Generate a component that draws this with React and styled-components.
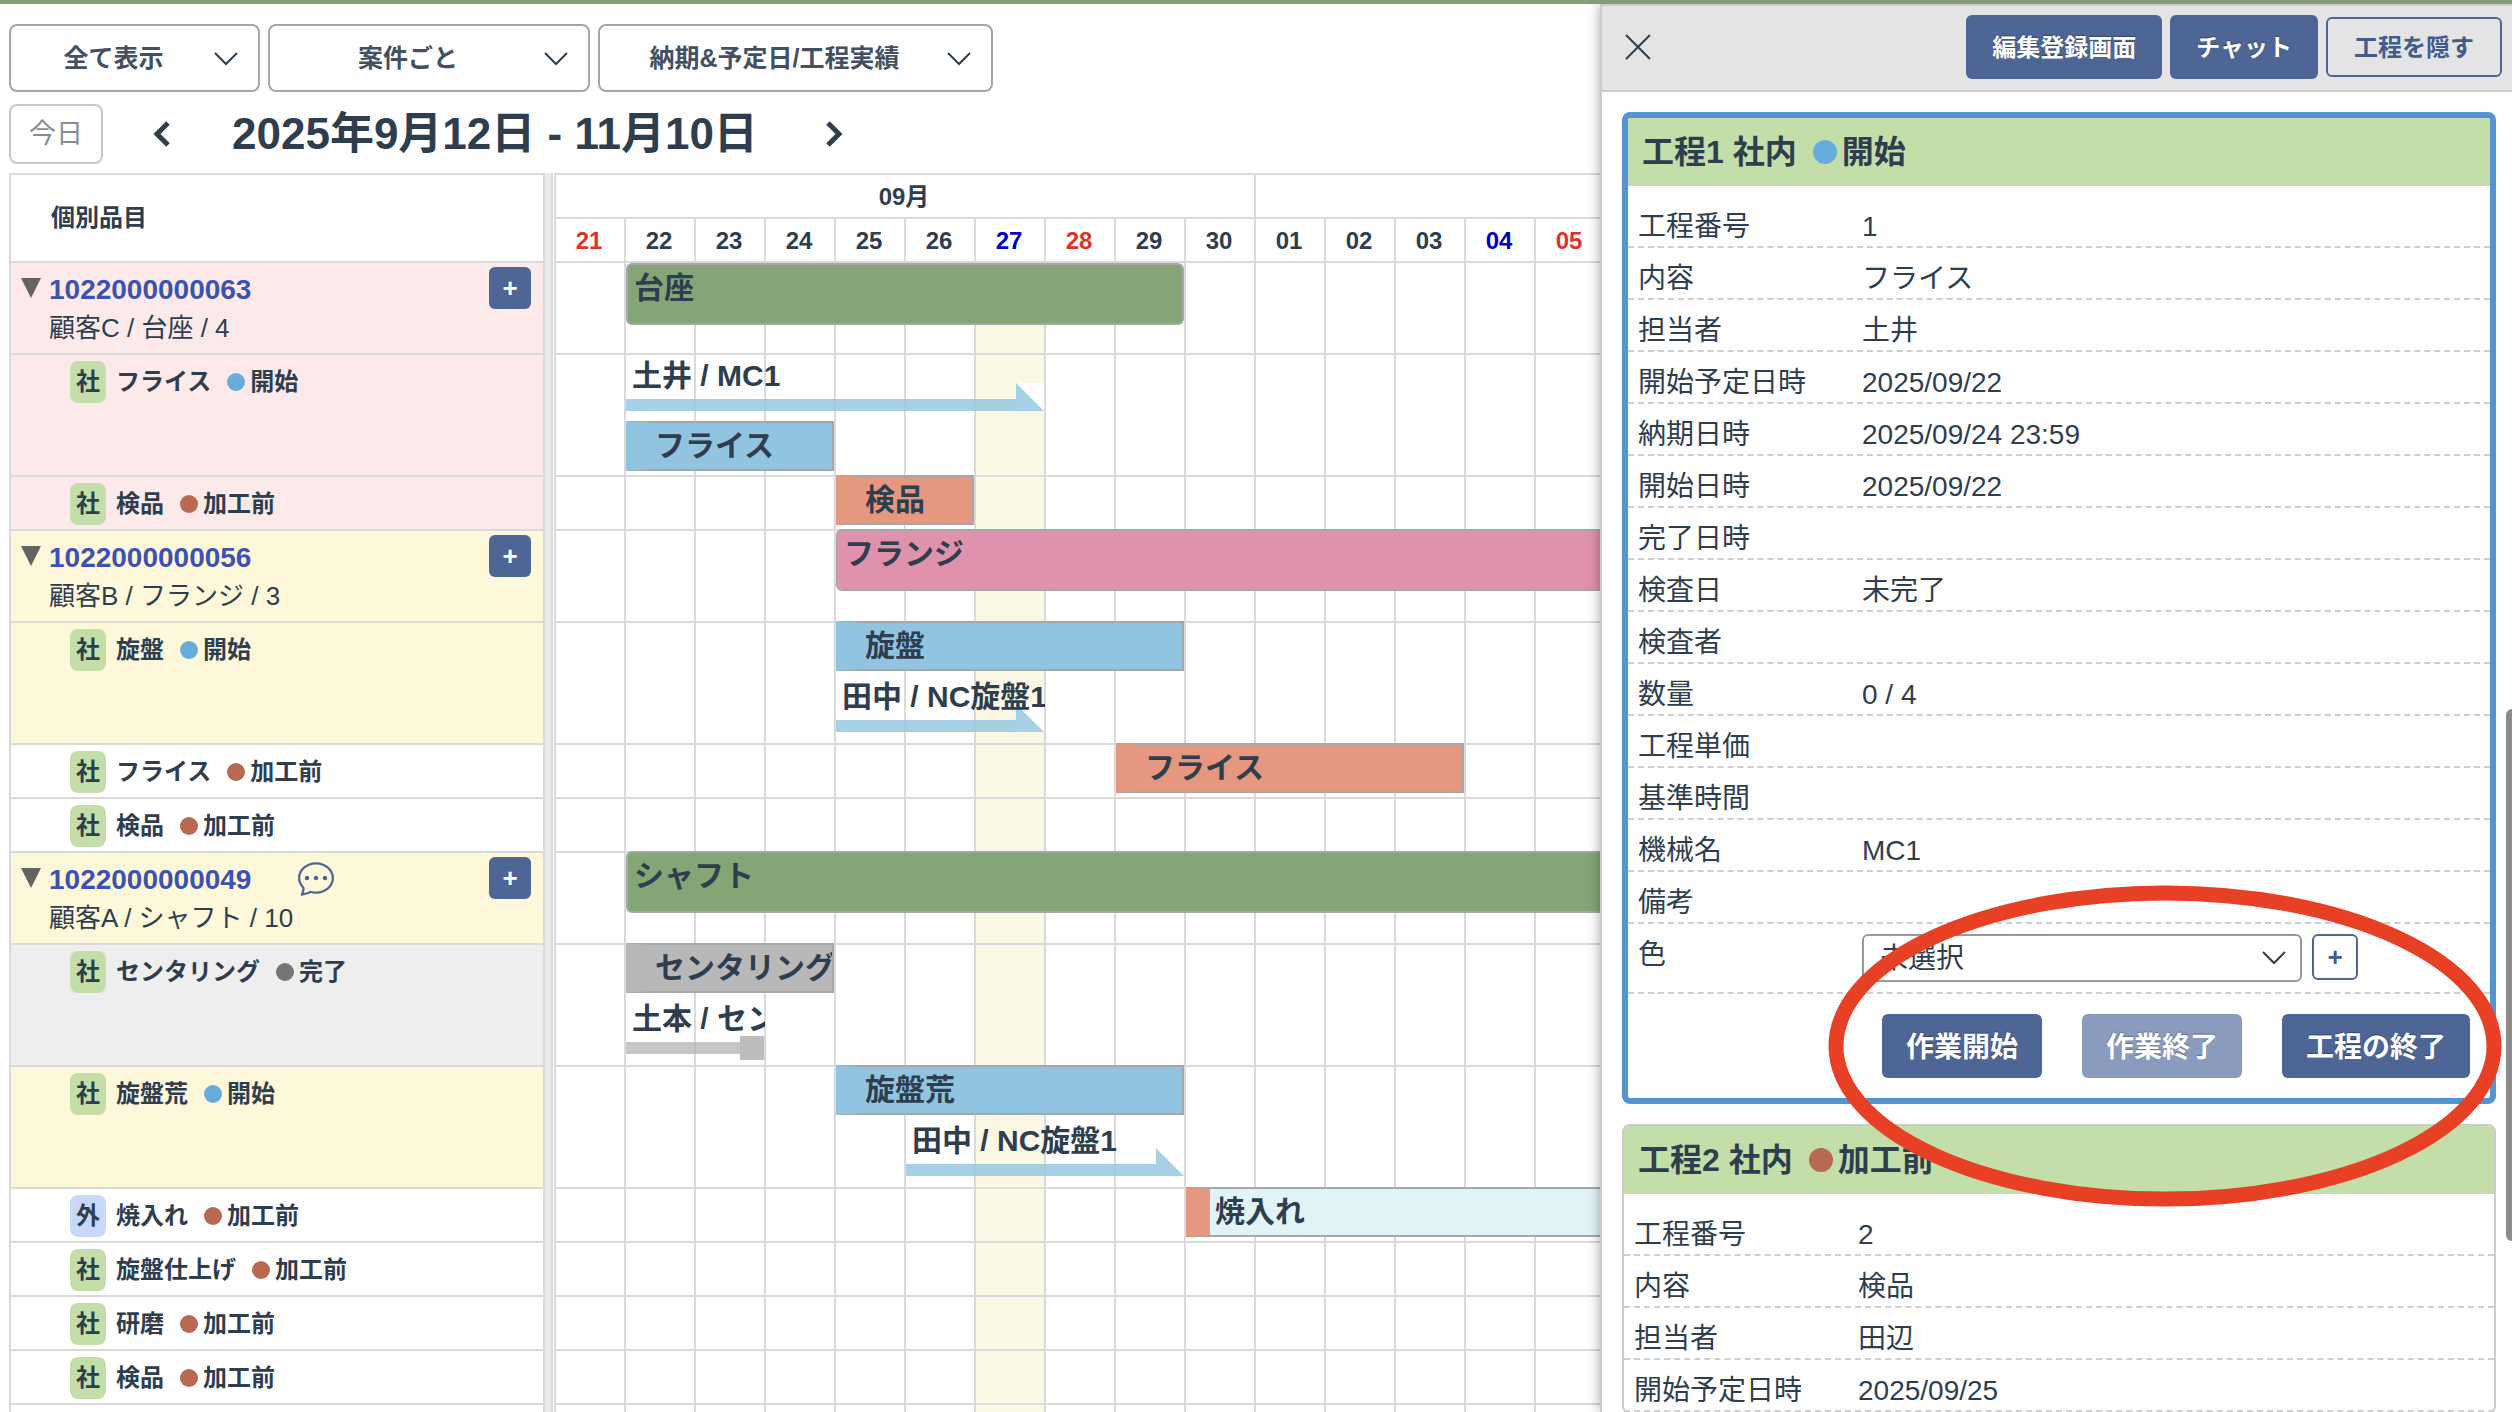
import styled, { createGlobalStyle } from 'styled-components';
import { BsChatDots } from 'react-icons/bs';

const GlobalStyle = createGlobalStyle`
  * {
    box-sizing: border-box;
  }
  body {
    margin: 0;
    background: #fff;
    color: #2f3e4e;
    font-family: "Liberation Sans", "Noto Sans CJK JP", sans-serif;
    font-size: 24px;
  }
  button, select {
    font-family: inherit;
    color: inherit;
  }
`;

const line = '#dadada';

const statusColors = {
  start: '#66addb',
  before: '#b86a50',
  done: '#757575',
};

const barColors = {
  green: '#84a676',
  pink: '#e091ab',
  blue: '#90c4e0',
  salmon: '#e59780',
  gray: '#b8b8b8',
  pale: '#e2f3f8',
};

const rowColors = {
  pink: '#fceaea',
  yellow: '#fdf8da',
  gray: '#eeeeee',
};

const Page = styled.div`
  display: flex;
  height: 100vh;
  overflow: hidden;
  border-top: 4px solid #849c78;
`;

const Main = styled.main`
  flex: 1;
  min-width: 0;
  padding: 20px 0 0 9px;
  overflow: hidden;
`;

const Filters = styled.div`
  display: flex;
  gap: 8px;
`;

const FilterBox = styled.label`
  position: relative;
  width: ${(props) => props.$width}px;

  svg {
    position: absolute;
    right: 22px;
    top: 28px;
    pointer-events: none;
  }
`;

const FilterSelect = styled.select`
  appearance: none;
  width: 100%;
  height: 68px;
  padding: 0 42px 0 0;
  border: 2px solid #a6a6a6;
  border-radius: 8px;
  background: #fff;
  color: #435063;
  font-size: 25px;
  font-weight: bold;
  text-align: center;
  text-align-last: center;
`;

const DateNav = styled.div`
  display: flex;
  align-items: center;
  height: 60px;
  margin: 12px 0 9px;
`;

const TodayButton = styled.button`
  width: 94px;
  height: 60px;
  margin-right: 39px;
  padding: 0;
  border: 2px solid #c8c8c8;
  border-radius: 8px;
  background: #fff;
  color: #858e98;
  font-size: 27px;
  line-height: 54px;
`;

const ArrowButton = styled.button`
  display: flex;
  align-items: center;
  justify-content: center;
  width: 40px;
  height: 44px;
  padding: 0;
  border: 0;
  background: none;
`;

const Period = styled.h1`
  margin: 0 56px 0 50px;
  font-size: 44px;
  line-height: 60px;
  white-space: nowrap;
`;

const Gantt = styled.div`
  display: flex;
`;

const Splitter = styled.div`
  flex: none;
  width: 8px;
  margin-right: 1px;
  border-right: 2px solid ${line};
  background: #ebebeb;
`;

const ItemTable = styled.table`
  flex: none;
  width: 536px;
  border-collapse: separate;
  border-spacing: 0;
  border: solid ${line};
  border-width: 2px 2px 0 2px;
`;

const ItemHead = styled.th`
  height: 88px;
  padding: 0 40px;
  border-bottom: 2px solid ${line};
  text-align: left;
  font-size: 24px;
  line-height: 28px;
`;

const ItemCell = styled.td`
  height: ${(props) => props.$height}px;
  padding: 0;
  border-bottom: 2px solid ${line};
  background: ${(props) => rowColors[props.$bg] || '#fff'};
  vertical-align: top;
`;

const OrderLine = styled.div`
  display: flex;
  align-items: center;
  height: 42px;
  margin: 4px 12px 0 10px;
`;

const Toggle = styled.button`
  display: flex;
  width: 28px;
  padding: 0;
  border: 0;
  background: none;
`;

const OrderLink = styled.a`
  padding-top: 3px;
  color: #3d52b0;
  font-size: 28px;
  font-weight: bold;
  text-decoration: none;
`;

const ChatLink = styled.a`
  display: flex;
  margin-left: 47px;
  color: #4d6695;
`;

const AddButton = styled.button`
  width: 42px;
  height: 42px;
  margin-left: auto;
  padding: 0;
  border: 0;
  border-radius: 6px;
  background: #4d6695;
  color: #fff;
  font-size: 26px;
  font-weight: bold;
`;

const Customer = styled.div`
  margin-left: 38px;
  font-size: 26px;
  line-height: 38px;
`;

const TaskLine = styled.div`
  display: flex;
  align-items: center;
  height: 42px;
  margin: 6px 0 0 59px;
  font-weight: bold;
  line-height: 42px;
`;

const Badge = styled.span`
  width: 36px;
  height: 42px;
  margin-right: 10px;
  border-radius: 8px;
  background: ${(props) => (props.$outside ? '#c9d8f8' : '#c3dea9')};
  text-align: center;
`;

const Dot = styled.span`
  width: ${(props) => props.$size}px;
  height: ${(props) => props.$size}px;
  margin: 0 5px 0 16px;
  border-radius: 50%;
  background: ${(props) => statusColors[props.$status]};
`;

const ChartPane = styled.div`
  flex: 1;
  min-width: 0;
  overflow: hidden;
`;

const ChartTable = styled.table`
  table-layout: fixed;
  width: 1122px;
  border-collapse: separate;
  border-spacing: 0;
  border: solid ${line};
  border-width: 2px 0 0 2px;
`;

const HeadCell = styled.th`
  height: 44px;
  padding: 2px 2px 0 0;
  border: solid ${line};
  border-width: 0 2px 2px 0;
  color: ${(props) => props.$color || 'inherit'};
  font-size: 24px;
  line-height: 36px;
`;

/* day lines every 70px, and the strip that marks today */
const ChartCell = styled.td`
  height: ${(props) => props.$height}px;
  padding: 0;
  border-bottom: 2px solid ${line};
  background:
    linear-gradient(#faf7e4, #faf7e4) 420px 0 / 68px 100% no-repeat,
    linear-gradient(to right, transparent 68px, ${line} 68px) 0 0 / 70px 100%;
  vertical-align: top;
`;

const Lanes = styled.div`
  display: grid;
  grid-template-columns: repeat(16, 70px);
  row-gap: 3px;
  margin-top: -2px;

  tr:first-child & {
    margin-top: 0;
  }
`;

const Bar = styled.div`
  grid-column: ${(props) => props.$from} / span ${(props) => props.$days};
  margin-right: 2px;
  border: 2px solid #a5a8aa;
  font-size: 30px;
  font-weight: bold;
  line-height: 46px;
  white-space: nowrap;
  overflow: hidden;
`;

const SummaryBar = styled(Bar)`
  height: 62px;
  padding-left: 6px;
  border-radius: 6px;
  background: ${(props) => barColors[props.$color]};
`;

const PlanBar = styled(Bar)`
  height: 50px;
  padding-left: 5px;
  border-left: 24px solid ${(props) => barColors[props.$color]};
  background: ${(props) => barColors[props.$fill || props.$color]};
`;

const Actual = styled.div`
  grid-column: ${(props) => props.$from} / span ${(props) => props.$days};
  position: relative;
  height: 65px;
  margin-right: 1px;
  overflow: hidden;
  font-size: 30px;
  font-weight: bold;
  line-height: 46px;
  white-space: nowrap;
`;

const ActualLabel = styled.div`
  position: relative;
  z-index: 1;
  height: 46px;
  padding-left: 6px;
`;

const Strip = styled.div`
  height: 12px;
  margin-right: ${(props) => (props.$done ? 25 : 28)}px;
  background: ${(props) => (props.$done ? 'rgba(184, 184, 184, 0.8)' : 'rgba(144, 196, 224, 0.8)')};
`;

const Tip = styled.svg`
  position: absolute;
  right: 1px;
  top: 30px;
`;

const EndBlock = styled.span`
  position: absolute;
  right: 1px;
  top: 40px;
  width: 24px;
  height: 24px;
  background: #bcbcbc;
`;

const Panel = styled.aside`
  position: relative;
  flex: none;
  width: 912px;
  border: solid #c9cccc;
  border-width: 2px 0 0 2px;
  background: #fff;
  box-shadow: 0 0 12px rgba(0, 0, 0, 0.35);
`;

const PanelHead = styled.header`
  display: flex;
  align-items: center;
  gap: 8px;
  height: 86px;
  padding: 0 10px 2px 23px;
  border-bottom: 2px solid #c9cccc;
  background: #e4e4e4;
`;

const CloseButton = styled.button`
  display: flex;
  margin-right: auto;
  padding: 0;
  border: 0;
  background: none;
`;

const Button = styled.button`
  height: 64px;
  padding: 0 26px 3px;
  border: 0;
  border-radius: 6px;
  background: #4d6695;
  color: #fff;
  font-size: 24px;
  font-weight: bold;
  text-shadow: 0 -1px 1px rgba(0, 0, 0, 0.3);
  white-space: nowrap;
`;

const OutlineButton = styled(Button)`
  height: 60px;
  border: 2px solid #4d6695;
  background: none;
  color: #435a8c;
  text-shadow: none;
`;

const ActionButton = styled(Button)`
  padding: 0 24px 3px;
  font-size: 28px;

  &:disabled {
    background: #8a9bbd;
  }
`;

const Cards = styled.div`
  display: flex;
  flex-direction: column;
  gap: 20px;
  padding: 20px 16px 0 20px;
`;

const Card = styled.section`
  border: ${(props) => (props.$active ? '6px solid #5494d0' : '2px solid #c9cccc')};
  border-radius: 8px;
  background: #fff;
  overflow: hidden;
`;

const CardTitle = styled.h2`
  display: flex;
  align-items: center;
  height: 68px;
  margin: 0;
  padding-left: 14px;
  background: #c3dea9;
  font-size: 32px;
  line-height: 68px;
`;

const Details = styled.dl`
  margin: 10px 0 0;
  font-size: 28px;
`;

const DetailRow = styled.div`
  display: grid;
  grid-template-columns: 224px 1fr;
  height: ${(props) => (props.$tall ? 70 : 52)}px;
  padding: 10px 10px 0;
  border-bottom: 2px dashed #cfcfcf;
  line-height: 42px;

  dt, dd {
    margin: 0;
  }
`;

const ColorField = styled.dd`
  display: flex;
  gap: 10px;
`;

const ColorBox = styled.div`
  position: relative;
  width: 440px;

  svg {
    position: absolute;
    right: 16px;
    top: 17px;
    pointer-events: none;
  }
`;

const ColorSelect = styled.select`
  appearance: none;
  display: block;
  width: 100%;
  height: 48px;
  padding: 0 48px 0 16px;
  border: 2px solid #999;
  border-radius: 6px;
  background: #fff;
  font-size: 28px;
`;

const ColorAdd = styled.button`
  width: 46px;
  height: 46px;
  padding: 0;
  border: 2px solid #4d6695;
  border-radius: 6px;
  background: #fff;
  color: #435a8c;
  font-size: 26px;
  font-weight: bold;
`;

const Actions = styled.div`
  display: flex;
  justify-content: flex-end;
  gap: 40px;
  padding: 20px;
`;

const ScrollThumb = styled.div`
  position: absolute;
  top: 703px;
  right: 0;
  width: 6px;
  height: 532px;
  border-radius: 6px 0 0 6px;
  background: #8c8c8c;
`;

const Circle = styled.svg`
  position: absolute;
  top: 879px;
  right: 10px;
  pointer-events: none;
`;

const days = [
  ['21', '#d8362a'], ['22'], ['23'], ['24'], ['25'], ['26'], ['27', '#0000c4'], ['28', '#d8362a'],
  ['29'], ['30'], ['01'], ['02'], ['03'], ['04', '#0000c4'], ['05', '#d8362a'], ['06'],
];

const rows = [
  {
    order: '1022000000063', customer: '顧客C / 台座 / 4', bg: 'pink', height: 92,
    bars: [{ kind: 'summary', label: '台座', from: 2, days: 8, color: 'green' }],
  },
  {
    task: 'フライス', status: 'start', bg: 'pink', height: 122,
    bars: [
      { kind: 'actual', label: '土井 / MC1', from: 2, days: 6 },
      { kind: 'plan', label: 'フライス', from: 2, days: 3, color: 'blue' },
    ],
  },
  {
    task: '検品', status: 'before', bg: 'pink', height: 54,
    bars: [{ kind: 'plan', label: '検品', from: 5, days: 2, color: 'salmon' }],
  },
  {
    order: '1022000000056', customer: '顧客B / フランジ / 3', bg: 'yellow', height: 92,
    bars: [{ kind: 'summary', label: 'フランジ', from: 5, days: 12, color: 'pink' }],
  },
  {
    task: '旋盤', status: 'start', bg: 'yellow', height: 122,
    bars: [
      { kind: 'plan', label: '旋盤', from: 5, days: 5, color: 'blue' },
      { kind: 'actual', label: '田中 / NC旋盤1', from: 5, days: 3 },
    ],
  },
  {
    task: 'フライス', status: 'before', height: 54,
    bars: [{ kind: 'plan', label: 'フライス', from: 9, days: 5, color: 'salmon' }],
  },
  { task: '検品', status: 'before', height: 54, bars: [] },
  {
    order: '1022000000049', customer: '顧客A / シャフト / 10', bg: 'yellow', height: 92, chat: true,
    bars: [{ kind: 'summary', label: 'シャフト', from: 2, days: 15, color: 'green' }],
  },
  {
    task: 'センタリング', status: 'done', bg: 'gray', height: 122,
    bars: [
      { kind: 'plan', label: 'センタリング', from: 2, days: 3, color: 'gray' },
      { kind: 'actual', label: '土本 / セン', from: 2, days: 2, done: true },
    ],
  },
  {
    task: '旋盤荒', status: 'start', bg: 'yellow', height: 122,
    bars: [
      { kind: 'plan', label: '旋盤荒', from: 5, days: 5, color: 'blue' },
      { kind: 'actual', label: '田中 / NC旋盤1', from: 6, days: 4 },
    ],
  },
  {
    task: '焼入れ', status: 'before', outside: true, height: 54,
    bars: [{ kind: 'plan', label: '焼入れ', from: 10, days: 7, color: 'salmon', fill: 'pale' }],
  },
  { task: '旋盤仕上げ', status: 'before', height: 54, bars: [] },
  { task: '研磨', status: 'before', height: 54, bars: [] },
  { task: '検品', status: 'before', height: 54, bars: [] },
  { height: 54, bars: [] },
];

const statusNames = { start: '開始', before: '加工前', done: '完了' };

const process1 = [
  ['工程番号', '1'],
  ['内容', 'フライス'],
  ['担当者', '土井'],
  ['開始予定日時', '2025/09/22'],
  ['納期日時', '2025/09/24 23:59'],
  ['開始日時', '2025/09/22'],
  ['完了日時', ''],
  ['検査日', '未完了'],
  ['検査者', ''],
  ['数量', '0 / 4'],
  ['工程単価', ''],
  ['基準時間', ''],
  ['機械名', 'MC1'],
  ['備考', ''],
];

const process2 = [
  ['工程番号', '2'],
  ['内容', '検品'],
  ['担当者', '田辺'],
  ['開始予定日時', '2025/09/25'],
];

function ChevronDown() {
  return (
    <svg width="24" height="14" viewBox="0 0 24 14" fill="none" stroke="#2f3e4e" strokeWidth="2">
      <path d="M1 1l11 11L23 1" />
    </svg>
  );
}

function Filter({ width, name, value }) {
  return (
    <FilterBox $width={width}>
      <FilterSelect aria-label={name}>
        <option>{value}</option>
      </FilterSelect>
      <ChevronDown />
    </FilterBox>
  );
}

function ItemRow({ row }) {
  return (
    <tr>
      <ItemCell $height={row.height} $bg={row.bg}>
        {row.order && (
          <>
            <OrderLine>
              <Toggle aria-label="折りたたむ">
                <svg width="20" height="20" viewBox="0 0 20 20"><path d="M0 0h20L10 20z" fill="#636363" /></svg>
              </Toggle>
              <OrderLink href="#order">{row.order}</OrderLink>
              {row.chat && <ChatLink href="#chat" aria-label="チャット"><BsChatDots size={36} /></ChatLink>}
              <AddButton>+</AddButton>
            </OrderLine>
            <Customer>{row.customer}</Customer>
          </>
        )}
        {row.task && (
          <TaskLine>
            <Badge $outside={row.outside}>{row.outside ? '外' : '社'}</Badge>
            {row.task}
            <Dot $size={18} $status={row.status} />
            {statusNames[row.status]}
          </TaskLine>
        )}
      </ItemCell>
    </tr>
  );
}

function ChartBar({ bar }) {
  if (bar.kind === 'summary') {
    return <SummaryBar $from={bar.from} $days={bar.days} $color={bar.color}>{bar.label}</SummaryBar>;
  }
  if (bar.kind === 'plan') {
    return <PlanBar $from={bar.from} $days={bar.days} $color={bar.color} $fill={bar.fill}>{bar.label}</PlanBar>;
  }
  return (
    <Actual $from={bar.from} $days={bar.days}>
      <ActualLabel>{bar.label}</ActualLabel>
      <Strip $done={bar.done} />
      {bar.done ? <EndBlock /> : (
        <Tip width="28" height="28" viewBox="0 0 28 28">
          <path d="M0 0h28v28z" fill="#fff" />
          <path d="M0 0l28 28H0z" fill="#a6d0e6" />
        </Tip>
      )}
    </Actual>
  );
}

function ProcessTitle({ name, status }) {
  return (
    <CardTitle>
      {name}
      <Dot $size={24} $status={status} />
      {statusNames[status]}
    </CardTitle>
  );
}

function DetailRows({ items }) {
  return items.map(([label, value]) => (
    <DetailRow key={label}>
      <dt>{label}</dt>
      <dd>{value}</dd>
    </DetailRow>
  ));
}

function App() {
  return (
    <>
      <GlobalStyle />
      <Page>
        <Main>
          <Filters>
            <Filter width={251} name="表示" value="全て表示" />
            <Filter width={322} name="単位" value="案件ごと" />
            <Filter width={395} name="日付" value="納期&予定日/工程実績" />
          </Filters>
          <DateNav>
            <TodayButton>今日</TodayButton>
            <ArrowButton aria-label="前へ">
              <svg width="18" height="26" viewBox="0 0 18 26" fill="none" stroke="#2f3e4e" strokeWidth="5"><path d="M15 2L4 13l11 11" /></svg>
            </ArrowButton>
            <Period>2025年9月12日 - 11月10日</Period>
            <ArrowButton aria-label="次へ">
              <svg width="18" height="26" viewBox="0 0 18 26" fill="none" stroke="#2f3e4e" strokeWidth="5"><path d="M3 2l11 11L3 24" /></svg>
            </ArrowButton>
          </DateNav>
          <Gantt>
            <ItemTable>
              <thead>
                <tr><ItemHead>個別品目</ItemHead></tr>
              </thead>
              <tbody>
                {rows.map((row, i) => <ItemRow key={i} row={row} />)}
              </tbody>
            </ItemTable>
            <Splitter />
            <ChartPane>
              <ChartTable>
                <thead>
                  <tr>
                    <HeadCell colSpan={10}>09月</HeadCell>
                    <HeadCell colSpan={6} />
                  </tr>
                  <tr>
                    {days.map(([day, color]) => <HeadCell key={day} $color={color}>{day}</HeadCell>)}
                  </tr>
                </thead>
                <tbody>
                  {rows.map((row, i) => (
                    <tr key={i}>
                      <ChartCell colSpan={16} $height={row.height}>
                        <Lanes>
                          {row.bars.map((bar) => <ChartBar key={bar.kind} bar={bar} />)}
                        </Lanes>
                      </ChartCell>
                    </tr>
                  ))}
                </tbody>
              </ChartTable>
            </ChartPane>
          </Gantt>
        </Main>
        <Panel>
          <PanelHead>
            <CloseButton aria-label="閉じる">
              <svg width="26" height="26" viewBox="0 0 26 26" stroke="#2f3e4e" strokeWidth="2"><path d="M1 1l24 24M25 1L1 25" /></svg>
            </CloseButton>
            <Button>編集登録画面</Button>
            <Button>チャット</Button>
            <OutlineButton>工程を隠す</OutlineButton>
          </PanelHead>
          <Cards>
            <Card $active>
              <ProcessTitle name="工程1 社内" status="start" />
              <Details>
                <DetailRows items={process1} />
                <DetailRow $tall>
                  <dt><label htmlFor="color">色</label></dt>
                  <ColorField>
                    <ColorBox>
                      <ColorSelect id="color"><option>未選択</option></ColorSelect>
                      <ChevronDown />
                    </ColorBox>
                    <ColorAdd>+</ColorAdd>
                  </ColorField>
                </DetailRow>
              </Details>
              <Actions>
                <ActionButton>作業開始</ActionButton>
                <ActionButton disabled>作業終了</ActionButton>
                <ActionButton>工程の終了</ActionButton>
              </Actions>
            </Card>
            <Card>
              <ProcessTitle name="工程2 社内" status="before" />
              <Details>
                <DetailRows items={process2} />
              </Details>
            </Card>
          </Cards>
          <ScrollThumb />
          <Circle width="674" height="322" viewBox="0 0 674 322">
            <ellipse cx="337" cy="161" rx="329" ry="153" fill="none" stroke="#e84025" strokeWidth="15" />
          </Circle>
        </Panel>
      </Page>
    </>
  );
}

export default App;
